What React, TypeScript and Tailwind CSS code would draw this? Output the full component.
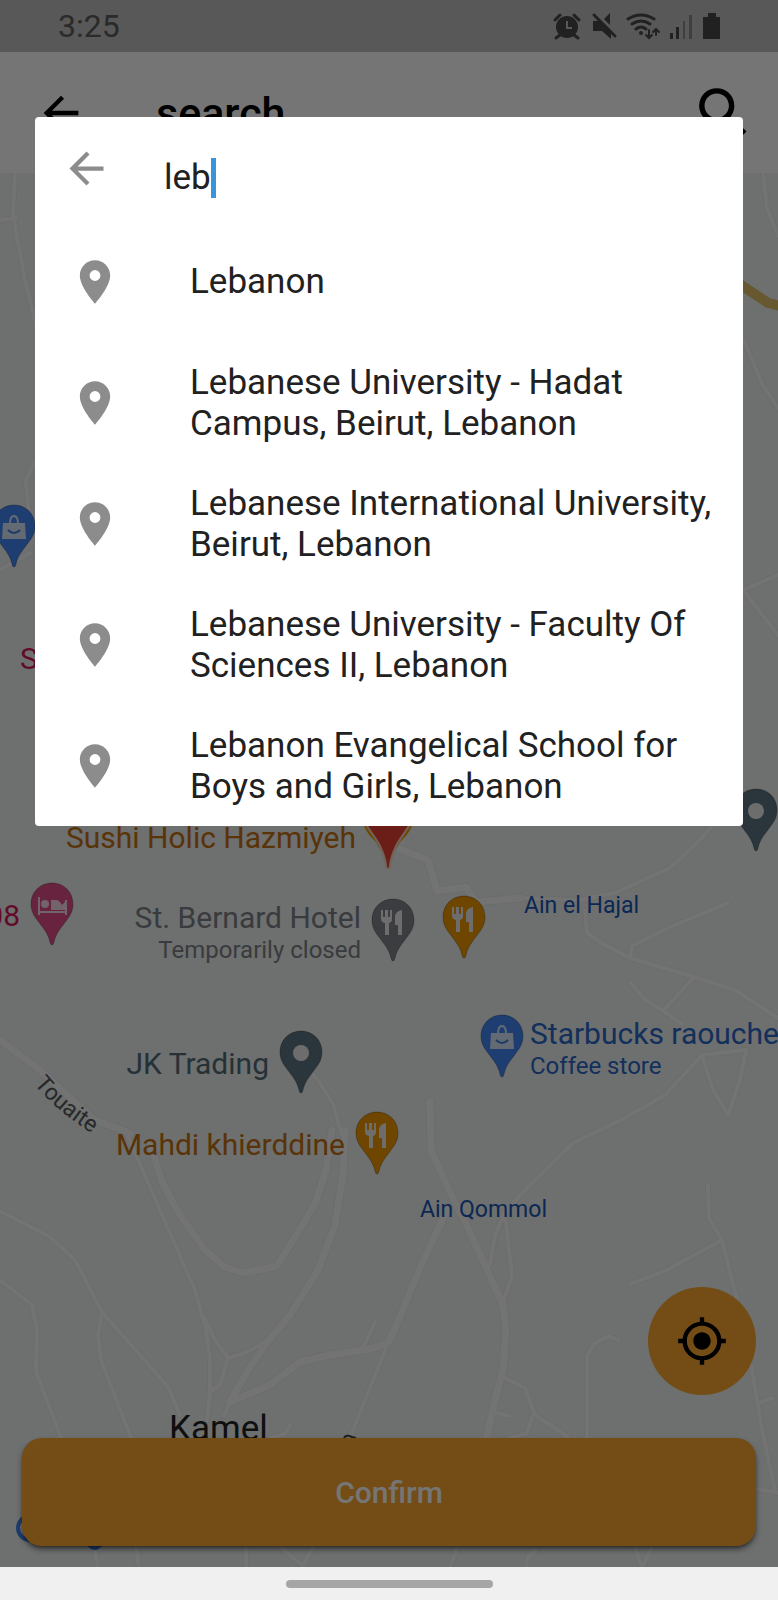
import { useState, type ReactNode } from "react";
import { MdArrowBack, MdPlace, MdSearch, MdMyLocation } from "react-icons/md";

const suggestions = [
  "Lebanon",
  "Lebanese University - Hadat Campus, Beirut, Lebanon",
  "Lebanese International University, Beirut, Lebanon",
  "Lebanese University - Faculty Of Sciences II, Lebanon",
  "Lebanon Evangelical School for Boys and Girls, Lebanon",
];

const wideRoads = [
  "M0 1040L40 1070L70 1098L95 1120L130 1133",
  "M150 1143L162 1182L180 1215L205 1250L225 1267L243 1273L277 1266L297 1234L315 1204L326 1170L332 1130",
  "M345 1130L343 1175L335 1225L318 1270L290 1315L265 1345L245 1375L230 1402L270 1385L300 1362L330 1355L370 1349L388 1343L396 1326L420 1268L447 1210",
  "M430 1102L431 1150L449 1190L465 1222L485 1265L503 1305L506 1330L503 1370L495 1400L486 1440",
  "M400 849L428 860L437 891L466 887L476 902L520 898",
];

const roads = [
  "M125 1130L147 1180L173 1240L195 1290L206 1330L210 1360L210 1390L207 1420",
  "M303 1062L320 1083L333 1104L342 1135",
  "M778 1018L735 990L694 977L630 958L605 945L587 933L585 910",
  "M630 958L632 946L670 927L728 903",
  "M694 977L664 1010",
  "M630 982L645 1000L662 1010L682 1024",
  "M520 898L580 900L615 893L670 868L698 842L712 826",
  "M745 1050L702 1055L665 1095L625 1118L573 1143L525 1190L505 1212L495 1235L490 1265",
  "M505 1215L512 1275L504 1300",
  "M702 1055L713 1090L728 1115L740 1080L746 1050",
  "M708 1185L709 1218L722 1240L737 1300L752 1370L762 1430L775 1490",
  "M722 1240L665 1271L630 1284",
  "M758 1403L773 1398",
  "M758 1489L778 1493",
  "M619 1340L608 1336L594 1344L587 1356L587 1440",
  "M503 1377L525 1388L535 1415L568 1437",
  "M533 1415L527 1433L510 1438",
  "M493 1412L510 1416",
  "M0 1211L50 1237L75 1260L102 1312L168 1387L180 1415",
  "M102 1312L98 1335L101 1360L132 1440",
  "M0 1280L32 1305L37 1330L36 1372L62 1440",
  "M203 1315L215 1340L228 1358L245 1353L265 1342",
  "M228 1358L220 1385L211 1391",
  "M230 1402L224 1416",
  "M375 1322L363 1348",
  "M386 1348L365 1400L349 1440",
  "M290 1425L285 1434L270 1438",
  "M94 1545L98 1568",
  "M136 1545L139 1568",
  "M246 1545L246 1568",
  "M278 1545L303 1566L314 1545",
  "M458 1545L450 1568",
  "M536 1550L528 1557L526 1568",
  "M634 1545L642 1568L653 1545",
  "M15 173L13 215L25 280L36 325",
  "M0 220L16 218",
  "M36 460L26 480L30 530",
  "M0 570L30 553",
  "M763 173L767 208L778 236",
  "M743 338L762 384L778 408",
  "M778 575L743 590L778 635",
];

function StatusIcons() {
  return (
    <svg viewBox="550 10 172 30" className="h-[30px] w-[172px] text-[#484848]" fill="currentColor" aria-hidden="true">
      {/* Alarm */}
      <circle cx="567" cy="26" r="11" />
      <path d="M555 19l5-5M579 19l-5-5M560 34l-4 3M574 34l4 3" stroke="currentColor" strokeWidth="3" strokeLinecap="round" />
      <path d="M567 20v7h5" fill="none" stroke="#bfbfbf" strokeWidth="2" />
      {/* Sound off */}
      <path d="M593 20h6l12 12v6l-9-8h-9zM604 18l6-6v12z" />
      <path d="M594 14l21 21" stroke="currentColor" strokeWidth="3" strokeLinecap="round" />
      {/* Wifi */}
      <g fill="none" stroke="currentColor" strokeWidth="3" strokeLinecap="round">
        <path d="M628 18q13-8 26 0M632 23q9-6 18 0M636 28q5-4 10 0" />
        <path d="M649 29v7M646 34l3 3l3-3M656 34v-6M653 31l3-3l3 3" strokeWidth="2" />
      </g>
      <circle cx="641" cy="32" r="2" />
      {/* Signal */}
      <path d="M670 32h3v6h-3zM676 26h3v12h-3z" />
      <path d="M683 20h2v18h-2zM689 14h3v24h-3z" opacity=".45" />
      {/* Battery */}
      <path d="M703 16h5v-4h8v4h4v22h-17z" />
    </svg>
  );
}

function Dot() {
  return <circle cx="22" cy="23" r="8" fill="#eeeeee" />;
}

function Cutlery() {
  return (
    <path
      fill="#eeeeee"
      d="M10 12h2v7h2v-7h3v7h2v-7h2v9q0 3-3 4v12h-4V25q-4-1-4-4zM31 12v25h-4V27h-3v-9q1-5 7-6z"
    />
  );
}

function Bag() {
  return (
    <>
      <path fill="#dbe7fb" d="M11 19h22l1 16H10z" />
      <path fill="none" stroke="#dbe7fb" strokeWidth="2" d="M18 20q0-8 4-8t4 8" />
      <path fill="none" stroke="#3f7de0" strokeWidth="2" d="M16 26q6 6 12 0" />
    </>
  );
}

function Bed() {
  return (
    <>
      <path fill="none" stroke="#f7dbe6" strokeWidth="2" d="M9 15v18M9 30h27M36 33V18" />
      <path fill="#f7dbe6" d="M21 18h6q3 1 5 5l4-4v9H21z" />
      <circle cx="15" cy="22" r="4" fill="#f7dbe6" />
    </>
  );
}

type MarkerProps = {
  className: string;
  labelClassName?: string;
  label?: string;
  note?: string;
  side?: "left" | "right";
  children: ReactNode;
};

function Marker({ className, labelClassName = "", label, note, side = "left", children }: MarkerProps) {
  const sideClass = side === "left" ? "right-full mr-[10px] text-right" : "left-full ml-[6px]";
  // One-line labels sit beside the middle of the pin, two-line ones start at its top
  const topClass = note ? "top-[2px]" : "top-4";

  return (
    <div className={`absolute h-[64px] w-[44px] ${className}`}>
      <svg viewBox="0 0 44 64" className="h-full w-full" aria-hidden="true">
        <path
          fill="currentColor"
          stroke="#000000"
          strokeOpacity=".25"
          d="M22 1C10 1 1 10 1 22c0 7 3 12 7 17 5 7 10 12 12 21 .5 2 1 3 2 3s1.500-1 2-3c2-9 7-14 12-21 4-5 7-10 7-17C43 10 34 1 22 1z"
        />
        {children}
      </svg>
      {label && (
        <div className={`absolute whitespace-nowrap ${sideClass} ${topClass} ${labelClassName}`}>
          <p className="text-[30px] leading-[36px]">{label}</p>
          {note && <p className="text-2xl leading-7">{note}</p>}
        </div>
      )}
    </div>
  );
}

function MapView() {
  return (
    <div className="absolute inset-0 overflow-hidden bg-[#edf3f1]">
      <svg viewBox="0 173 778 1395" preserveAspectRatio="xMidYMin slice" className="h-full w-full" fill="none" aria-hidden="true">
        <g strokeLinejoin="round" strokeLinecap="round">
          <g stroke="#e8edec">
            <path d={roads.join("")} strokeWidth="6" />
            <path d={wideRoads.join("")} strokeWidth="9" />
          </g>
          <g stroke="#fafafa">
            <path d={roads.join("")} strokeWidth="4" />
            <path d={wideRoads.join("")} strokeWidth="7" />
          </g>
          <path d="M735 281L768 303L785 307" stroke="#e0bf66" strokeWidth="10" />
        </g>
        <path id="touaite-street" d="M34 1084Q55 1110 96 1136" />
        <text className="fill-[#55585c] text-[23px]">
          <textPath href="#touaite-street">Touaite</textPath>
        </text>
        <path d="M344 1438q2-4 8-1l4 1" stroke="#444444" strokeWidth="2" />
        <path d="M30 1540A12 12 0 0 1 30 1516M88 1544q7 8 13 0" stroke="#4285f4" strokeWidth="4" />
      </svg>

      <Marker className="top-[331px] left-[-8px] text-[#4285f4]"><Bag /></Marker>
      <p className="absolute top-[468px] left-[20px] text-[30px] leading-[36px] text-[#d8175f]">S</p>
      <Marker className="top-[615px] left-[734px] text-[#5f7683]"><Dot /></Marker>

      {/* Selected place */}
      <div className="absolute top-[602px] left-[356px] h-[94px] w-[64px]">
        <svg viewBox="0 0 64 94" className="h-full w-full" aria-hidden="true">
          <path fill="#f29900" d="M6 42h52q-1 14-14 25L32 88L20 67Q7 56 6 42z" />
          <path fill="#ea4335" stroke="#f7d9c0" strokeWidth="2" d="M32 2C14 2 4 15 4 31c0 15 12 25 20 40 4 9 6 14 6 20 0 4 4 4 4 0 0-6 2-11 6-20 8-15 20-25 20-40C60 15 50 2 32 2z" />
        </svg>
        <p className="absolute top-[45px] right-full text-[30px] leading-[36px] whitespace-nowrap text-[#c5700f]">
          Sushi Holic Hazmiyeh
        </p>
      </div>

      <Marker className="top-[709px] left-[30px] text-[#e35088]" labelClassName="text-[#d8175f]" label="08">
        <Bed />
      </Marker>
      <Marker
        className="top-[725px] left-[371px] text-[#80868b]"
        labelClassName="text-[#7d8188]"
        label="St. Bernard Hotel"
        note="Temporarily closed"
      >
        <Cutlery />
      </Marker>
      <Marker className="top-[722px] left-[442px] text-[#f29900]"><Cutlery /></Marker>
      <Marker
        className="top-[841px] left-[480px] text-[#4285f4]"
        labelClassName="text-[#2a66c8]"
        label="Starbucks raouche"
        note="Coffee store"
        side="right"
      >
        <Bag />
      </Marker>
      <Marker className="top-[857px] left-[279px] text-[#5f7683]" labelClassName="text-[#546b78]" label="JK Trading">
        <Dot />
      </Marker>
      <Marker className="top-[938px] left-[355px] text-[#f29900]" labelClassName="text-[#c5700f]" label="Mahdi khierddine">
        <Cutlery />
      </Marker>

      <p className="absolute top-[715px] left-[524px] text-[23px] leading-9 text-[#1a56b8]">Ain el Hajal</p>
      <p className="absolute top-[1019px] left-[420px] text-[23px] leading-9 text-[#1a56b8]">Ain Qommol</p>
      <p className="absolute top-[1235px] left-[169px] text-[35px] leading-[41px] text-[#222222]">Kamel</p>
    </div>
  );
}

function SearchDialog() {
  const [query, setQuery] = useState("leb");

  return (
    <div role="dialog" aria-label="Search places" className="rounded-sm bg-white">
      <div className="flex h-[104px] items-start pt-[26px] pl-[26px]">
        <button type="button" aria-label="Close search" className="text-[#8c8c8c]">
          <MdArrowBack size={51} />
        </button>
        <div className="mt-[14px] ml-[52px] flex items-center">
          <input
            type="text"
            aria-label="Search"
            value={query}
            onChange={(e) => setQuery(e.target.value)}
            className="field-sizing-content text-[35px] leading-[41px] text-[#212121] caret-transparent outline-none"
          />
          <span className="h-10 w-[5px] bg-[#3994dc]" />
        </div>
      </div>
      <ul>
        {suggestions.map((place) => (
          <li key={place}>
            <button type="button" className="flex min-h-[121px] w-full items-center pr-[30px] pl-[34px] text-left">
              <MdPlace size={52} className="shrink-0 text-[#8c8c8c]" />
              <span className="ml-[69px] text-[35px] leading-[41px] text-[#212121]">{place}</span>
            </button>
          </li>
        ))}
      </ul>
    </div>
  );
}

export default function App() {
  return (
    <div className="flex min-h-screen flex-col font-[Roboto,sans-serif]">
      <div className="relative flex flex-1 flex-col">
        {/* Status bar */}
        <div className="flex h-[52px] items-center justify-between bg-[#bfbfbf] pr-14 pl-[58px]">
          <span className="text-[32px] leading-[36px] text-[#5c5c5c]">3:25</span>
          <StatusIcons />
        </div>

        {/* App bar */}
        <header className="flex h-[121px] items-center bg-white pr-[22px] pl-[35px]">
          <button type="button" aria-label="Back">
            <MdArrowBack size={52} />
          </button>
          <h1 className="ml-[69px] flex-1 text-[43px] leading-[50px] font-medium">search</h1>
          <button type="button" aria-label="Search">
            <MdSearch size={65} />
          </button>
        </header>

        {/* Map */}
        <main className="relative flex flex-1 flex-col justify-end px-[22px] pb-[21px]">
          <MapView />
          <button
            type="button"
            aria-label="My location"
            className="relative mb-[43px] flex size-[108px] items-center justify-center self-end rounded-full bg-[#fca530]"
          >
            <MdMyLocation size={52} />
          </button>
          <button
            type="button"
            className="relative h-[108px] w-full rounded-[20px] bg-[#fca530] text-[30px] font-medium text-white shadow-md shadow-black/50"
          >
            Confirm
          </button>
        </main>

        <div className="absolute inset-0 bg-black/54 px-[35px] pt-[117px]">
          <SearchDialog />
        </div>
      </div>

      {/* Gesture bar */}
      <div className="flex h-[33px] items-center justify-center bg-[#f0f0f0]">
        <span className="h-2 w-[207px] rounded-full bg-[#a6a6a6]" />
      </div>
    </div>
  );
}
